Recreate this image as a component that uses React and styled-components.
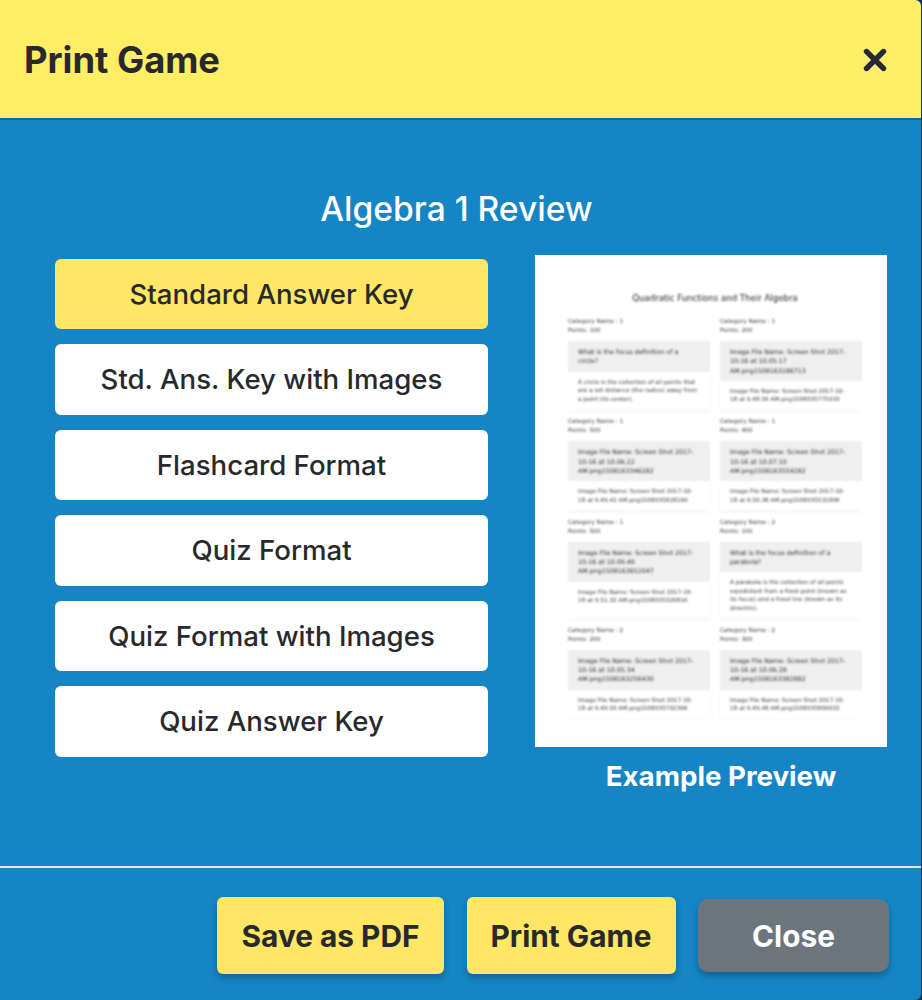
import React from "react";
import styled, { createGlobalStyle } from "styled-components";

const GlobalStyle = createGlobalStyle`
  html, body {
    margin: 0;
    padding: 0;
    background: #12344c;
  }
  * {
    box-sizing: border-box;
  }
`;

const Dialog = styled.div`
  width: 921px;
  height: 1000px;
  display: flex;
  flex-direction: column;
  overflow: hidden;
  border-radius: 0 6px 6px 0;
  background: #1585c5;
  font-family: "Inter", "Liberation Sans", sans-serif;
  color: #27292d;
`;

const Header = styled.header`
  height: 120px;
  flex: none;
  display: flex;
  align-items: center;
  justify-content: space-between;
  padding: 0 34px 0 24px;
  background: #ffed66;
  border-bottom: 2px solid #0f6a9c;
`;

const HeaderTitle = styled.h1`
  margin: 2px 0 0;
  font-size: 36.3px;
  font-weight: 700;
`;

const CloseIcon = styled.svg`
  width: 24px;
  height: 24px;
  display: block;
  margin-top: 1px;
  filter: drop-shadow(0 1px 0 rgba(255, 255, 255, 0.8));
`;

const Main = styled.main`
  flex: 1;
  padding-top: 69px;
`;

const GameTitle = styled.h2`
  margin: 0 0 26px;
  padding-right: 8px;
  height: 40px;
  line-height: 40px;
  text-align: center;
  color: #fff;
  font-size: 33.6px;
  font-weight: 500;
`;

const Columns = styled.div`
  display: grid;
  grid-template-columns: 433px 352px;
  column-gap: 47px;
  padding-left: 55px;
`;

const Options = styled.div`
  display: flex;
  flex-direction: column;
  gap: 15px;
  padding-top: 3.5px;
`;

const Option = styled.button`
  height: 70.5px;
  border: 0;
  border-radius: 6px;
  background: ${({ $active }) => ($active ? "#ffe664" : "#fff")};
  color: inherit;
  font-family: inherit;
  font-size: 27.6px;
  font-weight: 500;
`;

const PreviewColumn = styled.div`
  display: flex;
  flex-direction: column;
`;

const PreviewPage = styled.div`
  height: 492px;
  padding: 37px 25px 0 33px;
  background: #fff;
  font-family: "DejaVu Sans", sans-serif;
  color: #3a3a3a;
`;

const PreviewSheet = styled.div`
  filter: blur(0.8px);
`;

const PreviewHeading = styled.div`
  height: 12px;
  margin-bottom: 13px;
  line-height: 12px;
  text-align: center;
  font-size: 8.6px;
  color: #222;
`;

const PreviewScroll = styled.div`
  height: 403px;
  overflow: hidden;
  display: grid;
  grid-template-columns: 142px 142px;
  column-gap: 10px;
  row-gap: 7.5px;
  align-content: start;
`;

const Entry = styled.div`
  display: flex;
  flex-direction: column;
`;

const EntryMeta = styled.div`
  height: 24px;
  font-size: 5.85px;
  line-height: 8.9px;
`;

const EntryQuestion = styled.div`
  padding: 6px 10px;
  background: #efefef;
  font-size: 6.3px;
  line-height: 9.3px;
  color: #2a2a2a;
`;

const EntryAnswer = styled.div`
  flex: 1;
  padding: 6px 10px;
  font-size: 5.75px;
  line-height: 8.5px;
  box-shadow: 0 2px 4px rgba(0, 0, 0, 0.05);
`;

const PreviewLabel = styled.div`
  margin-top: 12px;
  padding-left: 20px;
  text-align: center;
  color: #fff;
  font-size: 27.7px;
  font-weight: 700;
`;

const Footer = styled.footer`
  height: 134px;
  flex: none;
  display: flex;
  align-items: center;
  justify-content: flex-end;
  gap: 22.5px;
  padding: 3px 32px 0 0;
  border-top: 2px solid #e3e6e8;
`;

const ActionButton = styled.button`
  height: 77px;
  padding: 0;
  width: ${({ $width }) => $width}px;
  border: 0;
  border-radius: 6px;
  background: #ffe664;
  color: #27292d;
  font-family: inherit;
  font-size: 29.8px;
  font-weight: 700;
  box-shadow: 0 4px 6px rgba(0, 0, 0, 0.25);
`;

const GreyButton = styled(ActionButton)`
  height: 73px;
  border-radius: 10px;
  background: #6c757d;
  color: #fff;
`;

const entries = [
  { points: 100, cat: 1, q: ["What is the focus definition of a", "circle?"], a: ["A circle is the collection of all points that", "are a set distance (the radius) away from", "a point (its center)."] },
  { points: 200, cat: 1, q: ["Image File Name: Screen Shot 2017-", "10-16 at 10.05.17", "AM.png1508163186713"], a: ["Image File Name: Screen Shot 2017-10-", "18 at 9.48.56 AM.png1508335775933"] },
  { points: 500, cat: 1, q: ["Image File Name: Screen Shot 2017-", "10-16 at 10.06.22", "AM.png1508163346282"], a: ["Image File Name: Screen Shot 2017-10-", "18 at 9.49.42 AM.png1508335828160"] },
  { points: 400, cat: 1, q: ["Image File Name: Screen Shot 2017-", "10-16 at 10.07.10", "AM.png1508163554282"], a: ["Image File Name: Screen Shot 2017-10-", "18 at 9.50.38 AM.png1508335531806"] },
  { points: 500, cat: 1, q: ["Image File Name: Screen Shot 2017-", "10-16 at 10.09.49", "AM.png1508163652047"], a: ["Image File Name: Screen Shot 2017-10-", "18 at 9.51.32 AM.png1508335320816"] },
  { points: 100, cat: 2, q: ["What is the focus definition of a", "parabola?"], a: ["A parabola is the collection of all points", "equidistant from a fixed point (known as", "its focus) and a fixed line (known as its", "directrix)."] },
  { points: 200, cat: 2, q: ["Image File Name: Screen Shot 2017-", "10-16 at 10.05.34", "AM.png1508163256430"], a: ["Image File Name: Screen Shot 2017-10-", "18 at 9.49.03 AM.png1508335792366"] },
  { points: 300, cat: 2, q: ["Image File Name: Screen Shot 2017-", "10-16 at 10.06.28", "AM.png1508163382882"], a: ["Image File Name: Screen Shot 2017-10-", "18 at 9.49.48 AM.png1508335809932"] },
];

const options = [
  "Standard Answer Key",
  "Std. Ans. Key with Images",
  "Flashcard Format",
  "Quiz Format",
  "Quiz Format with Images",
  "Quiz Answer Key",
];

const lines = (items) =>
  items.map((text) => <div key={text}>{text}</div>);

export default function App() {
  return (
    <>
      <GlobalStyle />
      <Dialog>
        <Header>
          <HeaderTitle>Print Game</HeaderTitle>
          <CloseIcon viewBox="0 0 24 24" fill="none" stroke="#27292d" strokeWidth="5.4" strokeLinecap="round">
            <path d="M3.5 3.5 20.5 20.5M20.5 3.5 3.5 20.5" />
          </CloseIcon>
        </Header>
        <Main>
          <GameTitle>Algebra 1 Review</GameTitle>
          <Columns>
            <Options>
              {options.map((label, i) => (
                <Option key={label} $active={i === 0}>{label}</Option>
              ))}
            </Options>
            <PreviewColumn>
              <PreviewPage>
                <PreviewSheet>
                  <PreviewHeading>Quadratic Functions and Their Algebra</PreviewHeading>
                  <PreviewScroll>
                    {entries.map((e, i) => (
                      <Entry key={i}>
                        <EntryMeta>
                          <div>Category Name : {e.cat}</div>
                          <div>Points: {e.points}</div>
                        </EntryMeta>
                        <EntryQuestion>{lines(e.q)}</EntryQuestion>
                        <EntryAnswer>{lines(e.a)}</EntryAnswer>
                      </Entry>
                    ))}
                  </PreviewScroll>
                </PreviewSheet>
              </PreviewPage>
              <PreviewLabel>Example Preview</PreviewLabel>
            </PreviewColumn>
          </Columns>
        </Main>
        <Footer>
          <ActionButton $width={227}>Save as PDF</ActionButton>
          <ActionButton $width={209}>Print Game</ActionButton>
          <GreyButton $width={191}>Close</GreyButton>
        </Footer>
      </Dialog>
    </>
  );
}
